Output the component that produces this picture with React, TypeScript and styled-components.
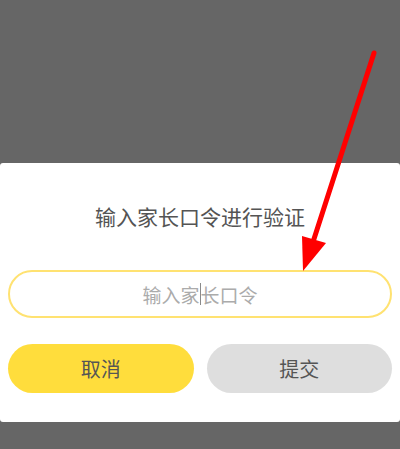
import React from "react";
import styled, { createGlobalStyle } from "styled-components";

const GlobalStyle = createGlobalStyle`
  html, body {
    margin: 0;
    padding: 0;
    background: #666666;
    font-family: "Noto Sans CJK SC", "Noto Sans", sans-serif;
  }
`;

export default function App() {
  return (
    <>
      <GlobalStyle />
      <Page>
        <Backdrop />
        <Sheet>
          <Title>输入家长口令进行验证</Title>
          <Field>
            输入家<Caret />长口令
          </Field>
          <Actions>
            <Button $primary>取消</Button>
            <Button>提交</Button>
          </Actions>
        </Sheet>
        <Backdrop $bottom />
        <Arrow viewBox="0 0 400 449" width="400" height="449">
          <line x1="374" y1="53" x2="313" y2="242" stroke="#ff0000" strokeWidth="5" strokeLinecap="round" />
          <polygon points="303,271 302,236 326,243" fill="#ff0000" />
        </Arrow>
      </Page>
    </>
  );
}

const Page = styled.div`
  position: relative;
  width: 400px;
  height: 449px;
  display: flex;
  flex-direction: column;
  overflow: hidden;
`;

const Backdrop = styled.div<{ $bottom?: boolean }>`
  height: ${(p) => (p.$bottom ? "27px" : "163px")};
  background: #666666;
  flex-shrink: 0;
`;

const Sheet = styled.section`
  height: 259px;
  box-sizing: border-box;
  background: #ffffff;
  border-radius: 3px;
  padding: 40px 8px 0;
  display: flex;
  flex-direction: column;
`;

const Title = styled.div`
  font-size: 21px;
  line-height: 26px;
  color: #545454;
  text-align: center;
`;

const Field = styled.div`
  margin-top: 41px;
  height: 48px;
  box-sizing: border-box;
  border: 2px solid #ffe271;
  border-radius: 24px;
  display: flex;
  align-items: center;
  justify-content: center;
  font-size: 19px;
  color: #ababab;
`;

const Caret = styled.span`
  display: inline-block;
  width: 1px;
  height: 22px;
  background: #8a8a8a;
`;

const Actions = styled.div`
  margin-top: 26px;
  display: grid;
  grid-template-columns: 1fr 1fr;
  gap: 13px;
`;

const Button = styled.div<{ $primary?: boolean }>`
  height: 49px;
  border-radius: 25px;
  background: ${(p) => (p.$primary ? "#ffdd3c" : "#dedede")};
  color: #555555;
  font-size: 20px;
  display: flex;
  align-items: center;
  justify-content: center;
`;

const Arrow = styled.svg`
  position: absolute;
  left: 0;
  top: 0;
  pointer-events: none;
`;
